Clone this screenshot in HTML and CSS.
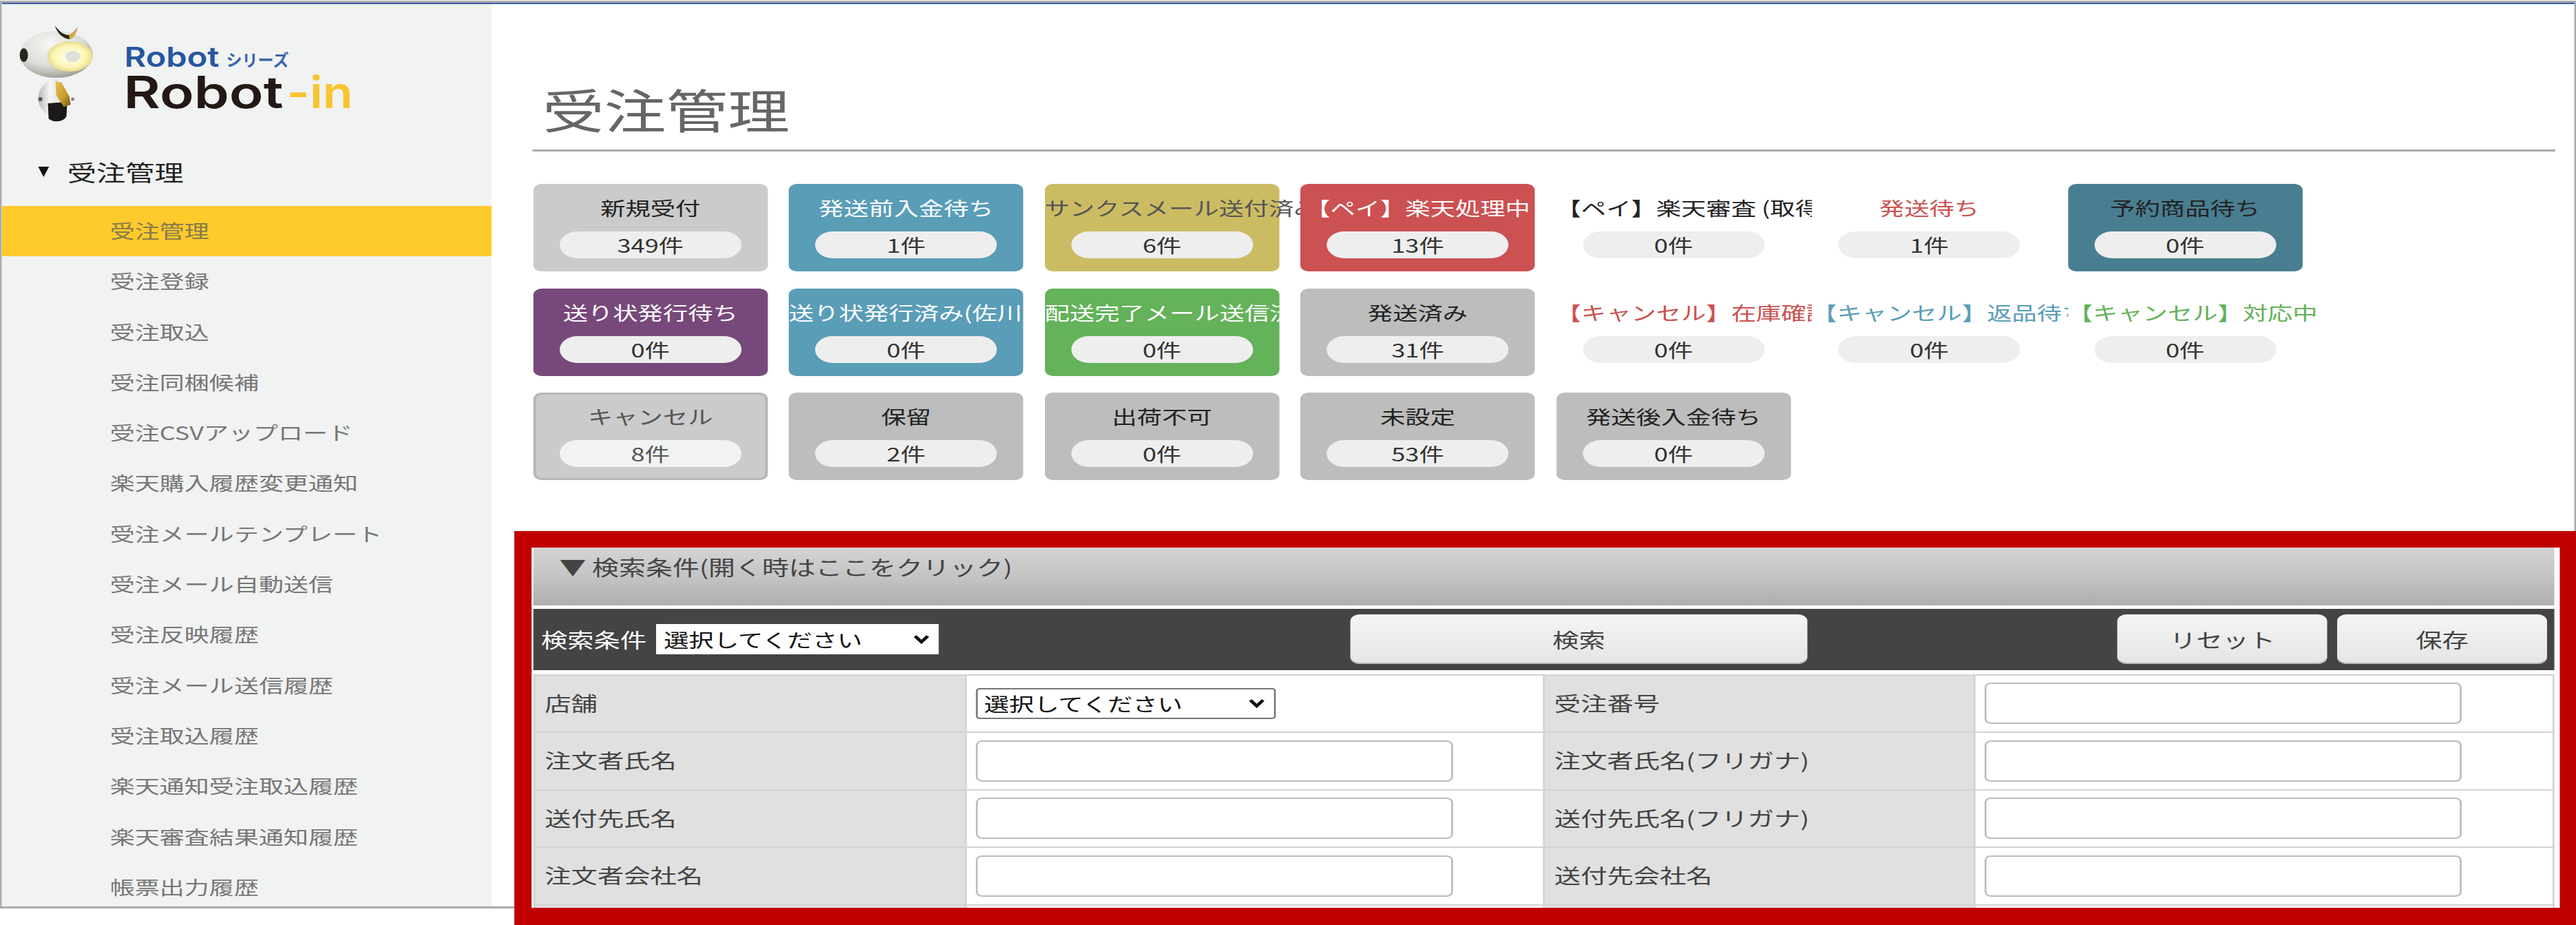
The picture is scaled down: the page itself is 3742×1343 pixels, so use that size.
FILE: index.html
```html
<!DOCTYPE html>
<html lang="ja">
<head>
<meta charset="utf-8">
<title>受注管理</title>
<link rel="stylesheet" href="styles.css">
</head>
<body>
<div class="stage">
  <div class="frame">
    <aside class="sidebar">
      <svg class="logo" viewBox="0 30 540 150" preserveAspectRatio="none" role="img" aria-label="Robot シリーズ Robot-in">
        <defs>
          <radialGradient id="head" cx="0.42" cy="0.3" r="0.8">
            <stop offset="0" stop-color="#f7f7f5"/>
            <stop offset="0.55" stop-color="#dcdcd8"/>
            <stop offset="0.85" stop-color="#a9a89f"/>
            <stop offset="1" stop-color="#77766c"/>
          </radialGradient>
          <radialGradient id="lens" cx="0.5" cy="0.5" r="0.55">
            <stop offset="0" stop-color="#fffff0"/>
            <stop offset="0.65" stop-color="#fdf6b4"/>
            <stop offset="0.9" stop-color="#e8dc8e"/>
            <stop offset="1" stop-color="#8f8c78"/>
          </radialGradient>
          <linearGradient id="tie" x1="0" y1="0" x2="1" y2="1">
            <stop offset="0" stop-color="#e8c454"/>
            <stop offset="0.6" stop-color="#c59a2b"/>
            <stop offset="1" stop-color="#6b5312"/>
          </linearGradient>
          <linearGradient id="body" x1="0" y1="0" x2="1" y2="0">
            <stop offset="0" stop-color="#bbbbb6"/>
            <stop offset="0.4" stop-color="#f6f6f4"/>
            <stop offset="1" stop-color="#cfcfca"/>
          </linearGradient>
        </defs>
        <path d="M53 142C54 125 66 115 80 115L96 140L92 164L66 166C58 160 52 152 53 142Z" fill="url(#body)"/>
        <path d="M67 150L95 148L94 168C92 177 74 179 68 172Z" fill="#1b1a18"/>
        <path d="M78 118L87 120L98 140L100 152L90 155L79 138Z" fill="url(#tie)"/>
        <circle cx="56" cy="144" r="3" fill="#555"/>
        <circle cx="103" cy="144" r="2.5" fill="#888"/>
        <ellipse cx="79" cy="79" rx="53" ry="34" fill="url(#head)"/>
        <ellipse cx="32" cy="80" rx="6" ry="10" fill="#242420"/>
        <ellipse cx="99" cy="82" rx="33" ry="22" fill="url(#lens)"/>
        <ellipse cx="103" cy="82" rx="11" ry="8" fill="#dfe0da"/>
        <path d="M77 37C84 46 90 51 98 51C102 49 106 44 110 40C108 48 104 56 98 57C88 56 80 47 77 37Z" fill="#2e2612"/>
        <path d="M98 51C102 49 106 44 110 40C108 48 104 56 98 57Z" fill="#d9ae3a"/>
        <text class="logo-series" x="178" y="97" textLength="138" lengthAdjust="spacingAndGlyphs">Robot</text>
        <text class="logo-series-kana" x="326" y="96" textLength="91" lengthAdjust="spacingAndGlyphs">シリーズ</text>
        <text class="logo-name" x="177" y="157" textLength="232" lengthAdjust="spacingAndGlyphs">Robot</text>
        <text class="logo-accent" x="414" y="157" textLength="96" lengthAdjust="spacingAndGlyphs">-in</text>
      </svg>
      <div class="menu-heading"><span class="menu-caret"></span>受注管理</div>
      <ul class="menu">
        <li class="menu-item is-active">受注管理</li>
        <li class="menu-item">受注登録</li>
        <li class="menu-item">受注取込</li>
        <li class="menu-item">受注同梱候補</li>
        <li class="menu-item">受注CSVアップロード</li>
        <li class="menu-item">楽天購入履歴変更通知</li>
        <li class="menu-item">受注メールテンプレート</li>
        <li class="menu-item">受注メール自動送信</li>
        <li class="menu-item">受注反映履歴</li>
        <li class="menu-item">受注メール送信履歴</li>
        <li class="menu-item">受注取込履歴</li>
        <li class="menu-item">楽天通知受注取込履歴</li>
        <li class="menu-item">楽天審査結果通知履歴</li>
        <li class="menu-item">帳票出力履歴</li>
      </ul>
    </aside>
    <main class="main">
      <h1 class="page-title">受注管理</h1>
      <div class="chips">
        <div class="chip chip-light"><div class="chip-title">新規受付</div><div class="chip-count">349件</div></div>
        <div class="chip chip-blue"><div class="chip-title">発送前入金待ち</div><div class="chip-count">1件</div></div>
        <div class="chip chip-khaki"><div class="chip-title">サンクスメール送付済み</div><div class="chip-count">6件</div></div>
        <div class="chip chip-red"><div class="chip-title">【ペイ】楽天処理中</div><div class="chip-count">13件</div></div>
        <div class="chip chip-plain"><div class="chip-title">【ペイ】楽天審査 (取得中)</div><div class="chip-count">0件</div></div>
        <div class="chip chip-plain text-red"><div class="chip-title">発送待ち</div><div class="chip-count">1件</div></div>
        <div class="chip chip-teal"><div class="chip-title">予約商品待ち</div><div class="chip-count">0件</div></div>

        <div class="chip chip-purple"><div class="chip-title">送り状発行待ち</div><div class="chip-count">0件</div></div>
        <div class="chip chip-blue"><div class="chip-title is-clipped">送り状発行済み(佐川急便)</div><div class="chip-count">0件</div></div>
        <div class="chip chip-green"><div class="chip-title is-clipped">配送完了メール送信済み</div><div class="chip-count">0件</div></div>
        <div class="chip chip-gray"><div class="chip-title">発送済み</div><div class="chip-count">31件</div></div>
        <div class="chip chip-plain text-red"><div class="chip-title">【キャンセル】在庫確認中</div><div class="chip-count">0件</div></div>
        <div class="chip chip-plain text-blue"><div class="chip-title">【キャンセル】返品待ち</div><div class="chip-count">0件</div></div>
        <div class="chip chip-plain text-green"><div class="chip-title">【キャンセル】対応中</div><div class="chip-count">0件</div></div>

        <div class="chip chip-selected"><div class="chip-title">キャンセル</div><div class="chip-count">8件</div></div>
        <div class="chip chip-gray"><div class="chip-title">保留</div><div class="chip-count">2件</div></div>
        <div class="chip chip-gray"><div class="chip-title">出荷不可</div><div class="chip-count">0件</div></div>
        <div class="chip chip-gray"><div class="chip-title">未設定</div><div class="chip-count">53件</div></div>
        <div class="chip chip-gray"><div class="chip-title">発送後入金待ち</div><div class="chip-count">0件</div></div>
      </div>

      <section class="search-panel">
        <div class="search-head">▼ 検索条件(開く時はここをクリック)</div>
        <div class="search-bar">
          <div class="search-preset">
            <span class="search-label">検索条件</span>
            <select class="select-preset"><option>選択してください</option></select>
          </div>
          <button class="btn btn-search" type="button">検索</button>
          <button class="btn btn-reset" type="button">リセット</button>
          <button class="btn" type="button">保存</button>
        </div>
        <table class="search-table">
          <colgroup>
            <col class="col-th1"><col class="col-td1"><col class="col-th2"><col class="col-td2">
          </colgroup>
          <tbody>
            <tr>
              <th>店舗</th>
              <td><select class="select-field"><option>選択してください</option></select></td>
              <th>受注番号</th>
              <td><input class="field" type="text"></td>
            </tr>
            <tr>
              <th>注文者氏名</th>
              <td><input class="field" type="text"></td>
              <th>注文者氏名(フリガナ)</th>
              <td><input class="field" type="text"></td>
            </tr>
            <tr>
              <th>送付先氏名</th>
              <td><input class="field" type="text"></td>
              <th>送付先氏名(フリガナ)</th>
              <td><input class="field" type="text"></td>
            </tr>
            <tr>
              <th>注文者会社名</th>
              <td><input class="field" type="text"></td>
              <th>送付先会社名</th>
              <td><input class="field" type="text"></td>
            </tr>
            <tr>
              <th></th><td></td><th></th><td></td>
            </tr>
          </tbody>
        </table>
      </section>
    </main>
  </div>
</div>
</body>
</html>
```

FILE: styles.css
```css
* { box-sizing: border-box; }

html, body {
  margin: 0;
  padding: 0;
  width: 3742px;
  height: 1343px;
  overflow: hidden;
  background: #fff;
}

/* The whole screen is a horizontally stretched capture: everything is laid
   out in unstretched units and widened once here. */
.stage {
  width: 2835px;
  height: 1343px;
  padding-top: 1px;
  transform: scaleX(1.32);
  transform-origin: 0 0;
  font-family: "Noto Sans CJK JP", "Noto Sans", sans-serif;
  font-size: 27.5px;
  color: #333;
}

.frame {
  display: flex;
  height: 1318px;
  border: 2px solid #aaa;
  border-top: 3px solid #aaa;
  border-bottom: 3px solid #aaa;
  box-shadow: inset 0 2px 0 #3a5ea8;
  background: #fff;
}

/* Sidebar */
.sidebar {
  flex: 0 0 539px;
  margin-top: 2px;
  background: #f1f2f2;
  overflow: hidden;
}

.logo {
  display: block;
  width: 409px;
  height: 150px;
  margin-top: 24px;
}

.logo-series {
  font: 600 40px "Inter", sans-serif;
  fill: #27569f;
}

.logo-series-kana {
  font: 700 24px "Noto Sans CJK JP", sans-serif;
  fill: #3a66aa;
}

.logo-name {
  font: 600 64px "Inter", sans-serif;
  fill: #231815;
}

.logo-accent {
  font: 600 64px "Inter", sans-serif;
  fill: #f7c531;
}

.menu-heading {
  display: flex;
  align-items: center;
  height: 119px;
  padding: 19px 0 0 40px;
  font-size: 32px;
  color: #222;
}

.menu-caret {
  width: 0;
  height: 0;
  margin-right: 20px;
  border-left: 6.5px solid transparent;
  border-right: 6.5px solid transparent;
  border-top: 15px solid #111;
}

.menu {
  margin: 0;
  padding: 0;
  list-style: none;
}

.menu-item {
  height: 73.3px;
  padding-left: 119px;
  font-size: 27.3px;
  line-height: 71px;
  color: #777;
  white-space: nowrap;
}

.menu-item.is-active {
  background: #ffca2c;
  color: #857a4c;
}

/* Main */
.main {
  flex: 1 1 0;
  min-width: 0;
  padding-top: 2px;
}

.page-title {
  height: 112px;
  margin: 102px 21px 0 45px;
  padding-left: 11px;
  border-bottom: 3px solid #aaa;
  font-size: 68px;
  font-weight: 400;
  line-height: 100px;
  color: #666;
}

.chips {
  display: grid;
  grid-template-columns: repeat(7, 258.3px);
  grid-auto-rows: 127px;
  column-gap: 23.2px;
  row-gap: 24.5px;
  margin: 47px 0 0 45.6px;
}

.chip {
  isolation: isolate;
  padding-top: 14px;
  border-radius: 9px;
  background: #fff;
  color: #222;
  text-align: center;
}

.chip-title {
  height: 40px;
  line-height: 40px;
  white-space: nowrap;
}

.chip-title.is-clipped { overflow: hidden; }

.chip-count {
  width: 200px;
  height: 39px;
  margin: 15px auto 0;
  border-radius: 20px;
  background: #eee;
  line-height: 39px;
  color: #333;
}

.chip-light { background: #cbcbcb; }
.chip-gray { background: #bdbdbd; }
.chip-blue { background: #5a9db7; color: #fff; }
.chip-khaki { background: #cbbc63; color: #555; }
.chip-red { background: #cb5152; color: #fff; }
.chip-teal { background: #497e91; color: #222; }
.chip-purple { background: #77487a; color: #fff; }
.chip-green { background: #64b25a; color: #fff; }
.text-red { color: #cb5152; }
.text-blue { color: #5a9db7; }
.text-green { color: #64b25a; }

.chip-selected {
  padding-top: 11px;
  border: 3px solid #b6b6b6;
  background: #cbcbcb;
  color: #555;
}

.chip-selected .chip-count {
  background: #f1f2f2;
  color: #555;
}

/* Search panel */
.search-panel {
  width: 2269px;
  height: 572px;
  margin: 73.5px 0 0 25px;
  padding: 0 6px 0 1.5px;
  border: solid #c00000;
  border-width: 24px 18px 25px 19px;
  background: #fff;
  font-size: 29px;
  overflow: hidden;
}

.search-head {
  height: 84px;
  padding: 5px 0 0 29px;
  background: linear-gradient(#d4d4d4, #c4c4c4 50%, #aeaeae);
  font-size: 29.5px;
  line-height: 44px;
  color: #444;
}

.search-bar {
  display: flex;
  align-items: center;
  height: 89px;
  margin-top: 5px;
  padding: 0 8px 0 9px;
  gap: 10.6px;
  background: #444;
}

.search-preset {
  display: flex;
  align-items: center;
  flex: 0 0 438px;
  gap: 10px;
}

.search-label { color: #fff; }

.select-preset,
.select-field {
  appearance: none;
  font-family: inherit;
  font-size: 27.5px;
  color: #111;
  background-color: #fff;
  background-image: url("data:image/svg+xml,%3Csvg xmlns='http://www.w3.org/2000/svg' width='18' height='14'%3E%3Cpath d='M2 2.5L9 11L16 2.5' fill='none' stroke='%23111' stroke-width='4'/%3E%3C/svg%3E");
  background-repeat: no-repeat;
  background-position: right 10px center;
}

.select-preset {
  width: 311px;
  height: 44px;
  border: none;
  border-radius: 0;
  padding: 0 0 0 9px;
}

.btn {
  width: 231px;
  height: 72px;
  border: none;
  border-radius: 10px;
  background: linear-gradient(#f3f4f4, #e5e5e5);
  box-shadow: inset 0 -2px 0 #bbb;
  font-family: inherit;
  font-size: 29px;
  color: #444;
}

.btn-search {
  width: 503px;
  margin-left: 442px;
}

.btn-reset { margin-left: auto; }

.search-table {
  width: 100%;
  margin-top: 6px;
  border-collapse: collapse;
  table-layout: fixed;
}

.col-th1 { width: 475px; }
.col-td1 { width: 636px; }
.col-th2 { width: 474px; }

.search-table th,
.search-table td {
  height: 83.5px;
  border: 2px solid #d2d2d2;
  padding: 0 0 0 10.5px;
}

.search-table th {
  padding-left: 11px;
  padding-bottom: 3px;
  background: #e0e0e0;
  font-weight: 400;
  text-align: left;
  color: #444;
  white-space: nowrap;
}

.select-field {
  display: block;
  width: 330px;
  height: 45px;
  border: 2px solid #777;
  border-radius: 4px;
  padding: 0 0 0 7px;
}

.field {
  display: block;
  width: 525px;
  height: 60px;
  border: 2px solid #bbb;
  border-radius: 7px;
  background: #fff;
}
```
